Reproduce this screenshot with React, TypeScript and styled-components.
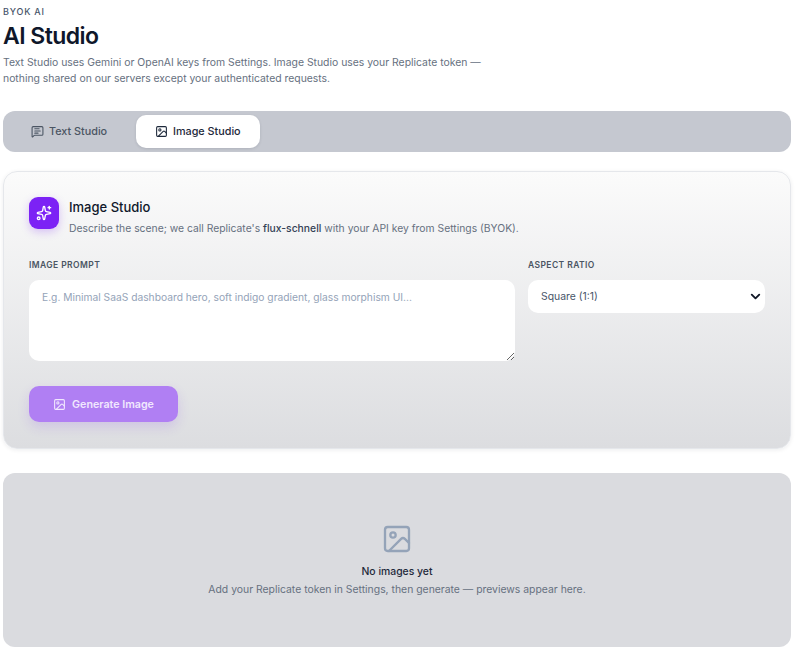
import React from 'react'
import styled, { createGlobalStyle } from 'styled-components'
import { ChevronDown, Image as ImageIcon, MessageSquareText, Sparkles } from 'lucide-react'

const GlobalStyle = createGlobalStyle`
  html, body {
    margin: 0;
    background: #fff;
    font-family: Inter, "Liberation Sans", sans-serif;
    color: #0f172a;
  }
  * { box-sizing: border-box; }
`

const Page = styled.div`
  width: 800px;
  height: 658px;
  overflow: hidden;
  padding: 6px 9px 0 3px;
`

const Eyebrow = styled.div`
  font-size: 9px;
  line-height: 12px;
  font-weight: 500;
  letter-spacing: 0.8px;
  color: #475569;
`

const Title = styled.h1`
  margin: 2px 0 0;
  font-size: 23px;
  line-height: 32px;
  font-weight: 600;
  letter-spacing: -0.55px;
  color: #0f172a;
`

const Intro = styled.p`
  margin: 3px 0 0;
  width: 485px;
  font-size: 10.4px;
  line-height: 16px;
  color: #667080;
`

const TabBar = styled.div`
  display: flex;
  gap: 4px;
  margin-top: 24px;
  height: 41px;
  padding: 4px;
  border-radius: 12px;
  background: #c5c8d0;
`

const Tab = styled.div<{ $active?: boolean }>`
  display: flex;
  align-items: center;
  gap: 5px;
  height: 33px;
  padding-left: ${p => (p.$active ? 19 : 24)}px;
  border-radius: 10px;
  font-size: 10.8px;
  font-weight: 500;
  white-space: nowrap;
  color: ${p => (p.$active ? '#1e293b' : '#4b5563')};
  background: ${p => (p.$active ? '#fff' : 'transparent')};
  width: ${p => (p.$active ? 124 : 125)}px;
  box-shadow: ${p => (p.$active ? '0 1px 3px rgba(15, 23, 42, 0.12)' : 'none')};
`

const Card = styled.section`
  margin-top: 19px;
  height: 278px;
  padding: 25px 25px 0;
  border: 1px solid #e5e7eb;
  border-radius: 14px;
  background: linear-gradient(180deg, #fbfbfb 0%, #dcdde0 100%);
  box-shadow: 0 1px 4px rgba(15, 23, 42, 0.08);
`

const CardHead = styled.div`
  display: flex;
  gap: 10px;
`

const IconTile = styled.div`
  display: flex;
  align-items: center;
  justify-content: center;
  width: 30px;
  height: 32px;
  border-radius: 9px;
  background: #7c22f5;
  color: #fff;
  box-shadow: 0 3px 8px rgba(124, 34, 245, 0.25);
`

const CardTitle = styled.h2`
  margin: 0;
  font-size: 13px;
  line-height: 20px;
  font-weight: 500;
  color: #0f172a;
`

const CardSub = styled.p`
  margin: 4px 0 0;
  font-size: 10.35px;
  line-height: 15px;
  color: #667080;
`

const Strong = styled.span`
  font-weight: 500;
  color: #334155;
`

const Fields = styled.div`
  display: grid;
  grid-template-columns: 486px 237px;
  gap: 13px;
  margin-top: 23px;
`

const Label = styled.div`
  font-size: 8.5px;
  line-height: 12px;
  font-weight: 600;
  letter-spacing: 0.42px;
  color: #4b5563;
  margin-bottom: 9px;
`

const Prompt = styled.textarea`
  display: block;
  width: 100%;
  height: 81px;
  padding: 10px 13px;
  border: none;
  border-radius: 10px;
  background: #fff;
  font-family: inherit;
  font-size: 10.25px;
  line-height: 15px;
  outline: none;
  &::placeholder { color: #94a3b8; }
`

const SelectWrap = styled.div`
  position: relative;
  height: 33px;
`

const Select = styled.select`
  appearance: none;
  display: block;
  width: 100%;
  height: 100%;
  padding: 0 13px;
  border: none;
  border-radius: 10px;
  background: #fff;
  font-family: inherit;
  font-size: 10.4px;
  color: #475569;
  outline: none;
`

const SelectArrow = styled.span`
  position: absolute;
  top: 9px;
  right: 2px;
  display: flex;
  color: #111827;
  pointer-events: none;
`

const GenerateButton = styled.button`
  display: flex;
  align-items: center;
  justify-content: center;
  gap: 6px;
  margin-top: 25px;
  width: 149px;
  height: 36px;
  border: none;
  border-radius: 10px;
  background: #b07ff3;
  color: #f1e8fe;
  font-family: inherit;
  font-size: 10.7px;
  font-weight: 600;
  box-shadow: 0 5px 12px rgba(124, 58, 237, 0.16);
`

const Empty = styled.section`
  display: flex;
  flex-direction: column;
  align-items: center;
  margin-top: 24px;
  height: 174px;
  padding-top: 50px;
  border-radius: 12px;
  background: #dadbdf;
`

const EmptyIcon = styled.div`
  display: flex;
  color: #94a3b8;
`

const EmptyTitle = styled.div`
  margin-top: 9px;
  font-size: 10.4px;
  line-height: 15px;
  font-weight: 500;
  color: #1e293b;
`

const EmptyText = styled.div`
  margin-top: 3px;
  font-size: 10.4px;
  line-height: 15px;
  color: #667080;
`

const App: React.FC = () => (
  <>
    <GlobalStyle />
    <Page>
      <Eyebrow>BYOK AI</Eyebrow>
      <Title>AI Studio</Title>
      <Intro>
        Text Studio uses Gemini or OpenAI keys from Settings. Image Studio uses your Replicate token — nothing shared on our servers except your authenticated requests.
      </Intro>

      <TabBar>
        <Tab>
          <MessageSquareText size={13} />
          Text Studio
        </Tab>
        <Tab $active>
          <ImageIcon size={13} />
          Image Studio
        </Tab>
      </TabBar>

      <Card>
        <CardHead>
          <IconTile>
            <Sparkles size={16} />
          </IconTile>
          <div>
            <CardTitle>Image Studio</CardTitle>
            <CardSub>
              Describe the scene; we call Replicate's <Strong>flux-schnell</Strong> with your API key from Settings (BYOK).
            </CardSub>
          </div>
        </CardHead>

        <Fields>
          <div>
            <Label>IMAGE PROMPT</Label>
            <Prompt placeholder="E.g. Minimal SaaS dashboard hero, soft indigo gradient, glass morphism UI..." />
          </div>
          <div>
            <Label>ASPECT RATIO</Label>
            <SelectWrap>
              <Select defaultValue="1:1">
                <option value="1:1">Square (1:1)</option>
                <option value="16:9">Wide (16:9)</option>
              </Select>
              <SelectArrow>
                <ChevronDown size={15} strokeWidth={3} />
              </SelectArrow>
            </SelectWrap>
          </div>
        </Fields>

        <GenerateButton>
          <ImageIcon size={13} />
          Generate Image
        </GenerateButton>
      </Card>

      <Empty>
        <EmptyIcon>
          <ImageIcon size={32} strokeWidth={1.75} />
        </EmptyIcon>
        <EmptyTitle>No images yet</EmptyTitle>
        <EmptyText>Add your Replicate token in Settings, then generate — previews appear here.</EmptyText>
      </Empty>
    </Page>
  </>
)

export default App
